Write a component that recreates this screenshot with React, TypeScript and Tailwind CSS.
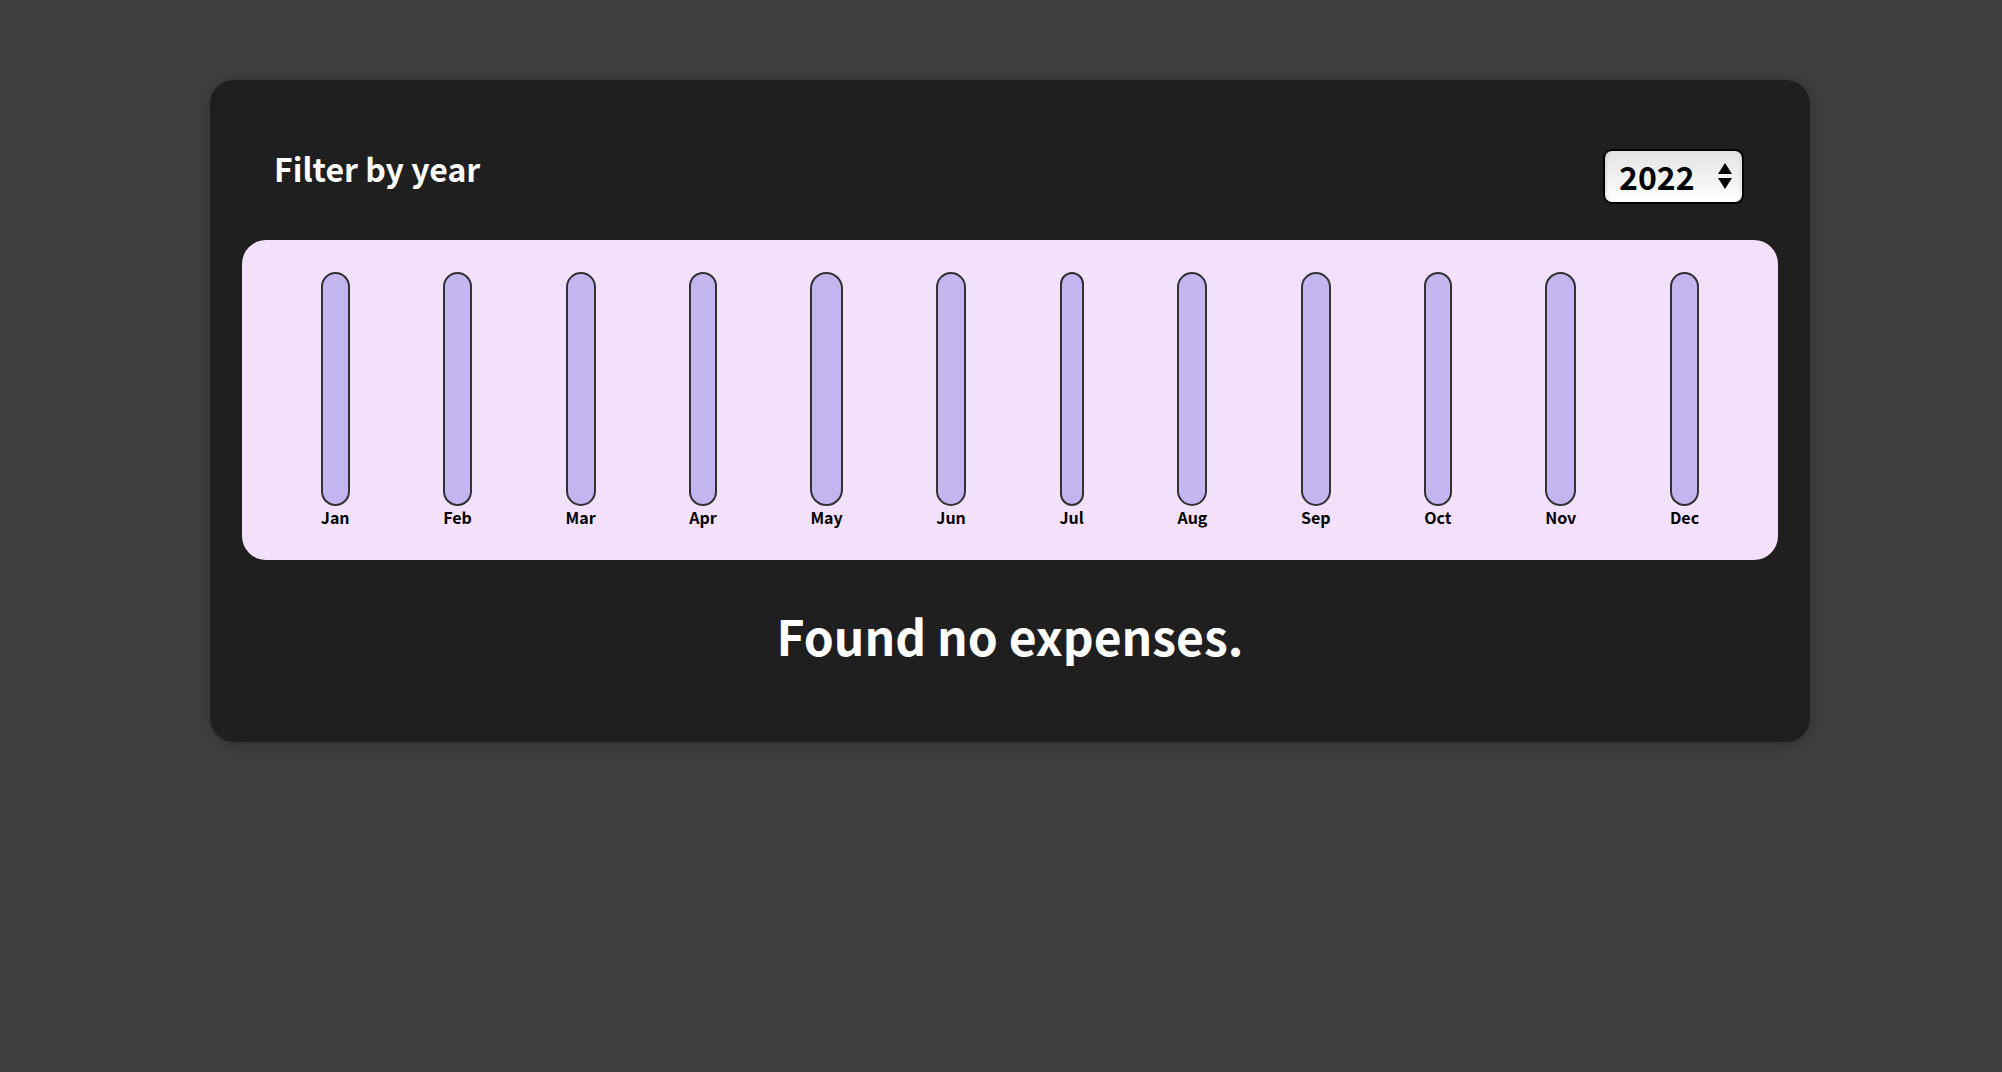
import { useState } from 'react';

const MONTHS = ['Jan', 'Feb', 'Mar', 'Apr', 'May', 'Jun', 'Jul', 'Aug', 'Sep', 'Oct', 'Nov', 'Dec'];

function ChartBar({ label }: { label: string }) {
  return (
    <div className="flex h-full flex-col items-center">
      <div className="w-full flex-1 rounded-[24px] border-2 border-[#313131] bg-[#c3b5f0]" />
      <div className="text-[16px] font-bold leading-[22px] text-black">{label}</div>
    </div>
  );
}

function YearSelect({ value, onChange }: { value: string; onChange: (v: string) => void }) {
  return (
    <div className="relative mr-[2px] h-[55px] w-[141px]">
      <select
        value={value}
        onChange={(e) => onChange(e.target.value)}
        className="h-full w-full appearance-none rounded-[9px] border-2 border-black bg-gradient-to-b from-[#e4e4e4] to-white pl-[14px] text-[32px] font-bold leading-none text-black outline-none shadow-[inset_4px_0_4px_-3px_rgba(0,0,0,0.12),inset_-4px_0_4px_-3px_rgba(0,0,0,0.12)]"
      >
        <option value="2022">2022</option>
        <option value="2021">2021</option>
        <option value="2020">2020</option>
        <option value="2019">2019</option>
      </select>
      {/* arrows */}
      <svg
        className="pointer-events-none absolute left-[114px] top-[13px]"
        width="16"
        height="28"
        viewBox="0 0 16 28"
      >
        <path d="M8 1 L15 12 L1 12 Z" fill="black" />
        <path d="M1 16 L15 16 L8 27 Z" fill="black" />
      </svg>
    </div>
  );
}

export default function App() {
  const [year, setYear] = useState('2022');

  return (
    <div
      className="min-h-screen bg-[#3f3f3f] pl-[18px] pt-[80px]"
      style={{ fontFamily: '"Noto Sans CJK JP", "Noto Sans", sans-serif' }}
    >
      <div className="mx-auto w-[1600px] rounded-[24px] bg-[#1f1f1f] px-[32px] pb-[32px] pt-[32px] shadow-[0_2px_16px_rgba(0,0,0,0.25)]">
        {/* Filter */}
        <div className="my-[32px] flex items-center justify-between px-[32px] text-white">
          <label className="mb-[16px] text-[32px] font-bold leading-[48px]">Filter by year</label>
          <YearSelect value={year} onChange={setYear} />
        </div>

        {/* Chart */}
        <div className="flex h-[320px] justify-around rounded-[24px] bg-[#f3e0fb] p-[32px] text-center">
          {MONTHS.map((m) => (
            <ChartBar key={m} label={m} />
          ))}
        </div>

        {/* Fallback */}
        <h2 className="my-[40px] text-center text-[48px] font-bold leading-[70px] text-white">
          Found no expenses.
        </h2>
      </div>
    </div>
  );
}
